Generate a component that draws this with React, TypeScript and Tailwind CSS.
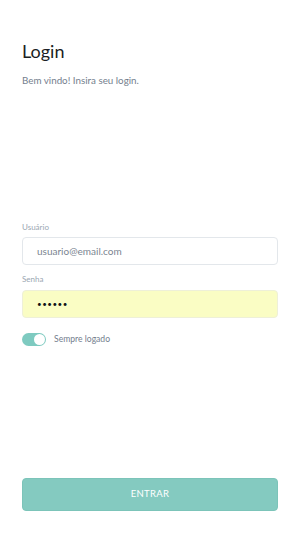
import React from "react";

export default function App() {
  return (
    <div
      className="w-[300px] h-[533px] bg-white flex flex-col px-[22px]"
      style={{ fontFamily: "Lato, 'Open Sans', sans-serif" }}
    >
      <h1 className="mt-[40px] text-[18px] leading-[22px] text-[#1b1f24] font-normal">Login</h1>
      <p className="mt-[12px] text-[9.8px] leading-[12px] text-[#74808e]">Bem vindo! Insira seu login.</p>

      <label className="mt-[136px] text-[8px] leading-[10px] text-[#9aa6b2]">Usuário</label>
      <div className="mt-[5px] h-[28px] rounded-[4px] border border-[#e3e7eb] flex items-center pl-[14px] text-[10px] text-[#7a8591]">
        usuario@email.com
      </div>

      <label className="mt-[9px] text-[8px] leading-[10px] text-[#9aa6b2]">Senha</label>
      <div className="mt-[6px] h-[28px] rounded-[4px] border border-[#eef0d8] bg-[#fafdc4] flex items-center pl-[14px] text-[8px] text-[#111418] tracking-[0.5px]">
        ••••••
      </div>

      <div className="mt-[15px] flex items-center gap-[8px]">
        <div className="w-[24px] h-[13px] rounded-full bg-[#7ecac0] relative">
          <div className="absolute right-[1px] top-[1px] w-[11px] h-[11px] rounded-full bg-white" />
        </div>
        <span className="text-[8.6px] text-[#74808e]">Sempre logado</span>
      </div>

      <button className="mt-[132px] h-[33px] w-full rounded-[4px] bg-[#84cac0] border border-[#7cc4b9] text-white text-[9.5px] tracking-[0.3px]">
        ENTRAR
      </button>
    </div>
  );
}
